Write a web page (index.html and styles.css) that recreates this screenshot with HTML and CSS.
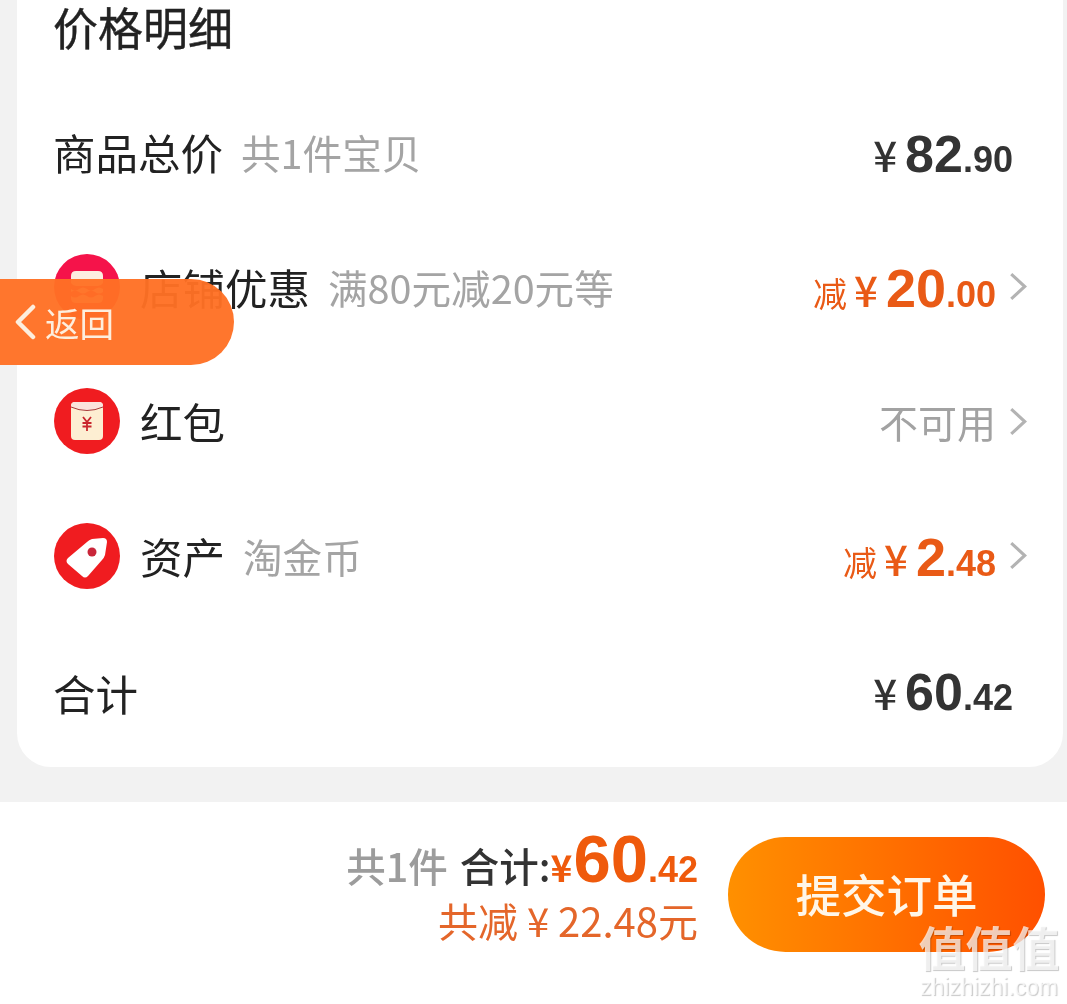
FILE: index.html
```html
<!DOCTYPE html>
<html lang="zh">
<head>
<meta charset="utf-8">
<title>价格明细</title>
<link rel="stylesheet" href="styles.css">
</head>
<body>
<main class="page">
  <section class="card">
    <h1 class="title">价格明细</h1>
    <div class="row">
      <div class="left"><span class="label">商品总价</span><span class="note">共1件宝贝</span></div>
      <div class="right pad"><span class="price dark"><span class="yen">¥</span><b>82</b><i>.90</i></span></div>
    </div>
    <div class="row">
      <div class="left">
        <svg class="icon" viewBox="0 0 66 66"><circle cx="33" cy="33" r="33" fill="#f5134a"/><path d="M17 22q0-5 5-5h22q5 0 5 5v7q-2 3-5 3H22q-3 0-5-3z" fill="#fdeee0"/><path d="M17 35q4 3 8 0t8 0 8 0 8 0v3q-4 3-8 0t-8 0-8 0-8 0zM17 42q4 3 8 0t8 0 8 0 8 0v2q0 5-5 5H22q-5 0-5-5z" fill="#fdeee0"/></svg>
        <span class="label">店铺优惠</span><span class="note">满80元减20元等</span>
      </div>
      <div class="right"><span class="price red"><span class="cut">减</span><span class="yen">¥</span><b class="big">20</b><i>.00</i></span><svg class="chev" viewBox="0 0 18 28"><path d="M2 2l13 12L2 26"/></svg></div>
    </div>
    <div class="row">
      <div class="left">
        <svg class="icon" viewBox="0 0 66 66"><circle cx="33" cy="33" r="33" fill="#f01c20"/><rect x="17" y="14" width="32" height="38" rx="4" fill="#fdeed2"/><path d="M17 18q0-4 4-4h24q4 0 4 4v1q-16 7-32 0z" fill="#fbe3dc"/><path d="M17 19q16 7 32 0" fill="none" stroke="#a83a3a" stroke-width="1"/><path d="M29 29l4 5 4-5M33 34v9M28.500 35h9M28.500 38.500h9" fill="none" stroke="#c8252c" stroke-width="1.800"/></svg>
        <span class="label">红包</span>
      </div>
      <div class="right"><span class="muted">不可用</span><svg class="chev" viewBox="0 0 18 28"><path d="M2 2l13 12L2 26"/></svg></div>
    </div>
    <div class="row">
      <div class="left">
        <svg class="icon" viewBox="0 0 66 66"><circle cx="33" cy="33" r="33" fill="#f01c20"/><path d="M33 19q2-2 5-3l11-1q4 0 4 4l-2 13q-1 3-3 5L34 53q-3 3-6 0L14 41q-3-3 0-6z" fill="#fff"/><circle cx="38" cy="29" r="4.500" fill="#c9263a"/></svg>
        <span class="label">资产</span><span class="note">淘金币</span>
      </div>
      <div class="right"><span class="price red"><span class="cut">减</span><span class="yen">¥</span><b class="big">2</b><i>.48</i></span><svg class="chev" viewBox="0 0 18 28"><path d="M2 2l13 12L2 26"/></svg></div>
    </div>
    <div class="row">
      <div class="left"><span class="label total-label">合计</span></div>
      <div class="right pad"><span class="price dark"><span class="yen">¥</span><b>60</b><i>.42</i></span></div>
    </div>
  </section>
  <footer class="bar">
    <div class="sum">
      <div class="sum-top"><span class="count">共1件</span><span class="total">合计:</span><span class="grand"><span class="gy">¥</span><b>60</b><i>.42</i></span></div>
      <div class="sum-off">共减 ¥ 22.48元</div>
    </div>
    <button class="submit">提交订单</button>
  </footer>
  <a class="back"><svg viewBox="0 0 22 36"><path d="M19 3L4 18l15 15"/></svg>返回</a>
  <div class="mark"><span class="mark-cn">值值值</span><span class="mark-en">zhizhizhi.com</span></div>
</main>
</body>
</html>
```
FILE: styles.css
```css
* { box-sizing: border-box; }
html, body { margin: 0; height: 1004px; overflow: hidden; }
body { background: #f2f2f2; font-family: "Noto Sans CJK SC", "Noto Sans", sans-serif; }
.page { position: relative; height: 1004px; display: flex; flex-direction: column; filter: blur(.45px); }
.card { height: 767px; flex: none; margin: 0 4px 0 17px; padding: 0 34px 0 36px; background: #fff; border-radius: 0 0 34px 34px; }
.title { margin: 0; height: 55px; font-size: 45px; line-height: 53px; font-weight: 400; color: #222; -webkit-text-stroke: .4px #222; }
.row { height: 134.500px; display: flex; align-items: center; justify-content: space-between; }
.title + .row { margin-top: 30px; }
.left, .right { display: flex; align-items: center; }
.icon { width: 66px; height: 66px; flex: none; margin: 0 20px 0 1px; }
.label { font-size: 42.500px; color: #222; line-height: 56px; }
.total-label { margin-top: 5px; }
.note { font-size: 39.600px; color: #a4a4a4; margin-left: 18px; line-height: 50px; }
.right { justify-content: flex-end; }
.right.pad { padding-right: 16px; }
.price { display: flex; align-items: baseline; font-family: "Liberation Sans", sans-serif; line-height: 60px; margin-top: 10px; }
.price b { font-size: 52px; font-weight: 700; }
.price b.big { font-size: 54px; }
.price i { font-style: normal; font-weight: 700; font-size: 36px; }
.dark { color: #333; }
.red { color: #e95a16; }
.yen { font-family: "Noto Sans CJK SC", sans-serif; font-size: 42px; margin-right: 8px; font-weight: 500; }
.cut { font-family: "Noto Sans CJK SC", sans-serif; font-size: 34px; margin-right: 7px; }
.muted { font-size: 39px; color: #a2a2a2; line-height: 56px; margin-left: -2px; }
.chev { width: 19px; height: 29px; margin: 0 1px 0 13px; flex: none; }
.chev path { fill: none; stroke: #b3b3b3; stroke-width: 3; }
.bar { margin-top: 35px; flex: 1; background: #fff; padding: 35px 22px 0 0; display: flex; justify-content: flex-end; align-items: flex-start; gap: 30px; }
.sum { display: flex; flex-direction: column; align-items: flex-end; margin-top: -9px; }
.sum-top { display: flex; align-items: baseline; height: 62px; font-size: 39.500px; line-height: 62px; }
.count { color: #9c9c9c; font-weight: 500; margin-right: 12px; }
.total { color: #333; font-weight: 500; }
.grand { color: #ef5a0c; font-family: "Liberation Sans", sans-serif; font-weight: 700; display: flex; align-items: baseline; }
.grand b { font-size: 67px; }
.grand i { font-style: normal; font-size: 36px; }
.gy { font-family: "Noto Sans CJK SC", sans-serif; font-size: 37px; margin-right: 1px; }
.sum-off { font-size: 40px; color: #e4662a; line-height: 50px; margin-top: 5px; }
.submit { width: 317px; height: 115px; border: 0; border-radius: 58px; background: linear-gradient(90deg, #ff9000, #ff5000); color: #fff6e8; font-family: inherit; font-size: 45.500px; padding: 0 0 4px; font-weight: 500; }
.back { position: absolute; left: 0; top: 279px; width: 234px; height: 86px; border-radius: 0 43px 43px 0; background: rgba(255, 112, 36, .96); color: #fdeedd; font-size: 34.500px; display: flex; align-items: center; padding-left: 14px; gap: 9px; }
.back svg { width: 22px; height: 36px; flex: none; }
.back svg path { fill: none; stroke: #fdeedd; stroke-width: 4.500; stroke-linecap: round; stroke-linejoin: round; }
.mark { position: absolute; left: 918px; top: 918px; width: 142px; display: flex; flex-direction: column; align-items: center; color: rgba(255, 255, 255, .72); text-shadow: 1px 1px 1px rgba(0, 0, 0, .22); }
.mark-cn { font-size: 47px; line-height: 56px; font-weight: 700; white-space: nowrap; }
.mark-en { font-family: "Liberation Sans", sans-serif; font-size: 23px; line-height: 26px; }
```
